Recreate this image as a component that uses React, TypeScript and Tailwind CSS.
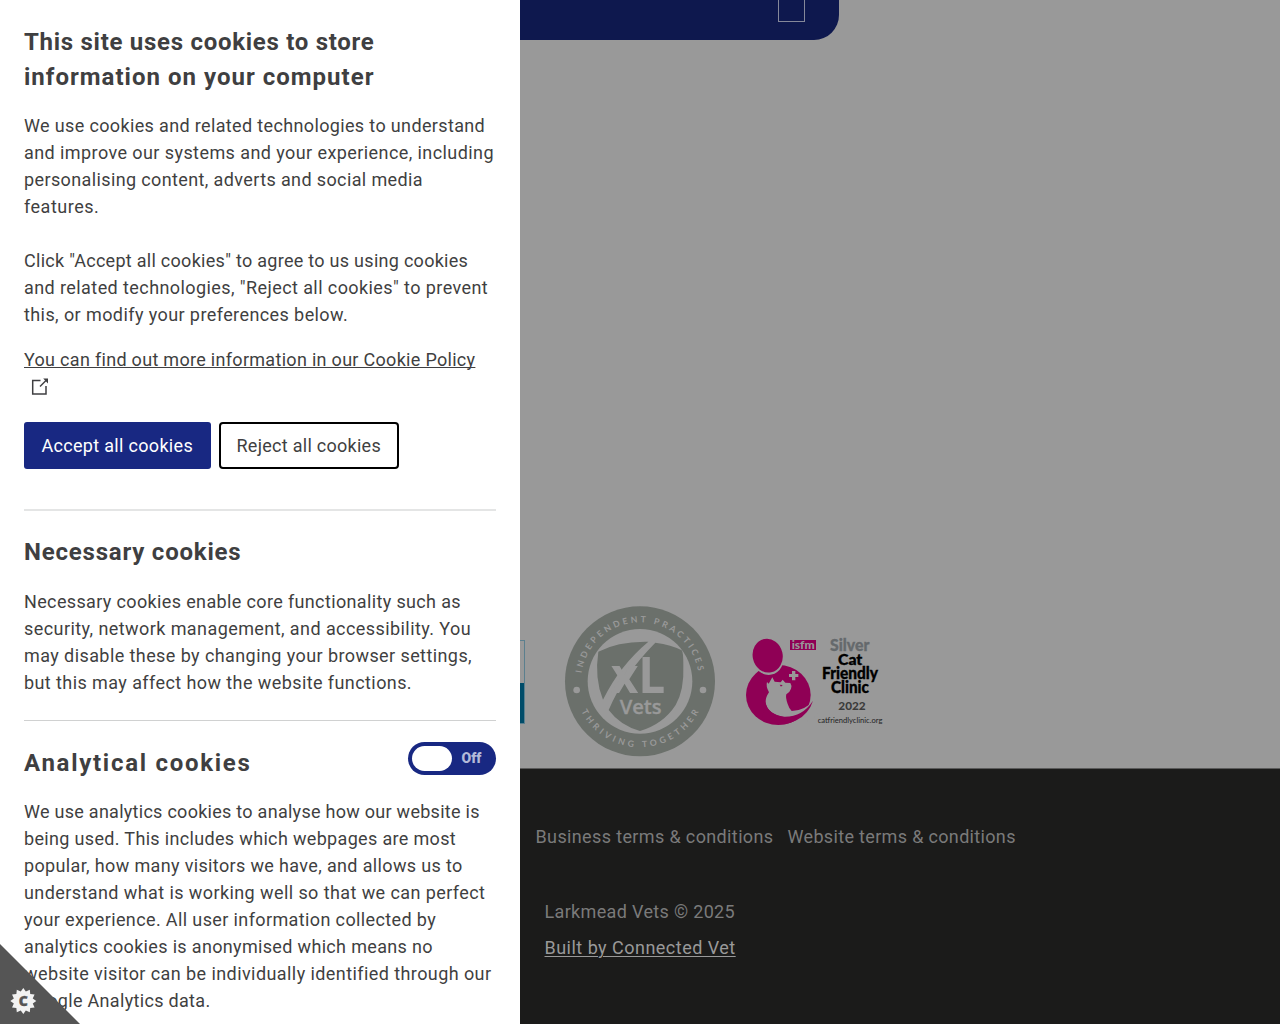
import React from 'react';

type LineData = [text: string, tracking: string];

function Lines({ lines }: { lines: LineData[] }) {
  return (
    <p className="text-[18px] leading-[27px]">
      {lines.map(([text, tracking]) => (
        <span key={text} className={`block whitespace-nowrap ${tracking}`}>
          {text}
        </span>
      ))}
    </p>
  );
}

const intro: LineData[] = [
  ['We use cookies and related technologies to understand', 'tracking-[0.355px]'],
  ['and improve our systems and your experience, including', 'tracking-[0.42px]'],
  ['personalising content, adverts and social media', 'tracking-[0.38px]'],
  ['features.', 'tracking-[0.5px]'],
];

const choices: LineData[] = [
  ['Click "Accept all cookies" to agree to us using cookies', 'tracking-[0.282px]'],
  ['and related technologies, "Reject all cookies" to prevent', 'tracking-[0.416px]'],
  ['this, or modify your preferences below.', 'tracking-[0.41px]'],
];

const necessary: LineData[] = [
  ['Necessary cookies enable core functionality such as', 'tracking-[0.36px]'],
  ['security, network management, and accessibility. You', 'tracking-[0.425px]'],
  ['may disable these by changing your browser settings,', 'tracking-[0.415px]'],
  ['but this may affect how the website functions.', 'tracking-[0.415px]'],
];

const analytical: LineData[] = [
  ['We use analytics cookies to analyse how our website is', 'tracking-[0.272px]'],
  ['being used. This includes which webpages are most', 'tracking-[0.335px]'],
  ['popular, how many visitors we have, and allows us to', 'tracking-[0.355px]'],
  ['understand what is working well so that we can perfect', 'tracking-[0.415px]'],
  ['your experience. All user information collected by', 'tracking-[0.38px]'],
  ['analytics cookies is anonymised which means no', 'tracking-[0.335px]'],
  ['website visitor can be individually identified through our', 'tracking-[0.42px]'],
  ['Google Analytics data.', 'tracking-[0.32px]'],
];

function XLVetsLogo() {
  return (
    <svg viewBox="0 0 510 495" className="h-[165px] w-[170px] shrink-0" aria-label="XL Vets">
      <defs>
        <path id="arcTop" d="M79.7 219.4 A177 177 0 0 1 430.3 219.4" />
        <path id="arcBottom" d="M78.6 334 A198 198 0 0 0 431.4 334" />
      </defs>
      <circle cx="255" cy="244" r="225" fill="#6b706b" />
      <circle cx="255" cy="244" r="157" fill="#999" />
      <path
        d="M130 155 Q190 123 280 125 Q194 197 144 299 Q118 235 130 155Z M301 128 Q350 134 380 151 Q385 155 385 195 Q388 270 362 315 Q325 372 255 393 Q195 376 161 330 Q205 225 301 128Z"
        fill="#6b706b"
      />
      <g fill="#999" fontFamily="Open Sans, sans-serif" fontWeight="700">
        <text x="167" y="278" fontSize="153" textLength="164" lengthAdjust="spacingAndGlyphs">xL</text>
        <text x="194" y="342" fontSize="61" fontWeight="600" textLength="126" lengthAdjust="spacingAndGlyphs" stroke="#999" strokeWidth="1">Vets</text>
      </g>
      <g fill="#999" fontFamily="Lato, sans-serif" fontWeight="700" fontSize="26">
        <text>
          <textPath href="#arcTop" textLength="500">INDEPENDENT PRACTICES</textPath>
        </text>
        <text>
          <textPath href="#arcBottom" textLength="434">THRIVING TOGETHER</textPath>
        </text>
      </g>
      <circle cx="65" cy="270" r="10" fill="#999" />
      <circle cx="444" cy="270" r="10" fill="#999" />
    </svg>
  );
}

function CatClinicLogo() {
  return (
    <svg viewBox="0 0 480 315" className="h-[105px] w-[160px] shrink-0" aria-label="Cat Friendly Clinic">
      <ellipse cx="130" cy="195" rx="97" ry="90" fill="#8f0055" />
      <ellipse cx="98" cy="79" rx="48" ry="56" transform="rotate(-12 98 79)" fill="#999" />
      <ellipse cx="98" cy="77" rx="45" ry="51" transform="rotate(-12 98 77)" fill="#8f0055" />
      <path
        d="M96 156 L101 161 L112 142 L119 155 L137 157 L143 149 L151 158 L166 159 Q171 166 168 176 Q164 188 154 193 Q151 203 158 222 Q162 235 170 243 Q211 241 234 212 L250 250 L225 275 L180 262 Q140 266 112 249 Q92 235 92 214 Q92 202 102 187 Q92 169 96 156Z"
        fill="#999"
      />
      <path d="M92 218 Q98 252 148 260 Q202 261 234 212 Q222 251 184 271 Q133 297 80 266Z" fill="#8f0055" />
      <path d="M134 164 l9 1 l-5 5z" fill="#8f0055" />
      <path d="M171 123h10v9h9v9h-9v10h-10v-10h-9v-9h9z" fill="#999" />
      <rect x="165" y="30" width="78" height="30" fill="#8f0055" />
      <g fontFamily="Lato, sans-serif" fontWeight="900">
        <text x="170" y="56" fontSize="32" fill="#999" textLength="69" lengthAdjust="spacingAndGlyphs">isfm</text>
        <text x="285" y="63" fontSize="48" fill="#65696c" stroke="#65696c" strokeWidth="1" textLength="118" lengthAdjust="spacingAndGlyphs">Silver</text>
        <g fill="#000" stroke="#000" strokeWidth="1">
          <text x="309" y="106" fontSize="47" textLength="73" lengthAdjust="spacingAndGlyphs">Cat</text>
          <text x="261" y="147" fontSize="49" textLength="168" lengthAdjust="spacingAndGlyphs">Friendly</text>
          <text x="288" y="188" fontSize="49" textLength="114" lengthAdjust="spacingAndGlyphs">Clinic</text>
        </g>
        <text x="310" y="240" fontSize="34" fill="#3c3c3c" textLength="82" lengthAdjust="spacingAndGlyphs">2022</text>
        <text x="248" y="279" fontSize="24" fontWeight="400" fill="#222" textLength="194" lengthAdjust="spacingAndGlyphs">catfriendlyclinic.org</text>
      </g>
    </svg>
  );
}

const badgePoints = Array.from({ length: 24 }, (_, i) => {
  const r = i % 2 === 0 ? 13 : 9.8;
  const a = (i * Math.PI) / 12;
  return `${(13 + r * Math.cos(a)).toFixed(2)},${(13 + r * Math.sin(a)).toFixed(2)}`;
}).join(' ');

function CookieControlTab() {
  return (
    <button className="absolute bottom-0 left-0 size-20" aria-label="Cookie control">
      <svg viewBox="0 0 80 80" className="size-20">
        <path d="M0 0 L80 80 H0Z" fill="#555" />
        <g transform="translate(10.3 44)">
          <polygon points={badgePoints} fill="#f2f2f2" />
          <text x="13" y="18" textAnchor="middle" fontFamily="Open Sans, sans-serif" fontWeight="800" fontSize="14" fill="#555" stroke="#555" strokeWidth="0.4">
            C
          </text>
        </g>
      </svg>
    </button>
  );
}

function CookiePanel() {
  return (
    <aside className="relative h-[1024px] w-[520px] shrink-0 overflow-hidden bg-white px-6 pt-[25px] text-[#3f3f41]">
      <h1 className="text-[24px] leading-[35px] font-bold">
        <span className="block tracking-[0.717px]">This site uses cookies to store</span>
        <span className="block tracking-[1.015px]">information on your computer</span>
      </h1>
      <div className="mt-[17px] flex flex-col gap-[27px]">
        <Lines lines={intro} />
        <Lines lines={choices} />
      </div>
      <a className="mt-[18px] block text-[18px] leading-[27px]">
        <span className="block whitespace-nowrap tracking-[0.3px] underline decoration-1 underline-offset-[1px] [text-decoration-skip-ink:none]">
          You can find out more information in our Cookie Policy
        </span>
        <svg viewBox="0 0 17 17" className="mt-[5px] ml-[7px] size-[17px]" fill="none" stroke="#3f3f41" strokeWidth="1.5">
          <path d="M9.5 2.5H1.7V16H15V8" />
          <path d="M9 8.5L15.5 2" />
          <path d="M12.2 .6h4.8v4.8z" fill="#3f3f41" stroke="none" />
        </svg>
      </a>
      <div className="mt-[26.5px] flex gap-2 text-[18px] leading-[27px]">
        <button className="h-[47px] w-[186.5px] rounded-[3px] bg-[#182882] tracking-[0.312px] text-white">Accept all cookies</button>
        <button className="h-[47px] w-[180.5px] rounded-[4px] border-2 border-black tracking-[0.274px]">Reject all cookies</button>
      </div>
      <hr className="mt-10 border-t-2 border-[#e4e5e5]" />
      <h2 className="mt-[24.5px] text-[24px] leading-[35px] font-bold tracking-[0.796px]">Necessary cookies</h2>
      <div className="mt-[18px]">
        <Lines lines={necessary} />
      </div>
      <hr className="mt-[24px] border-t border-[#d0d1d1]" />
      <div className="mt-[21px] flex items-start justify-between">
        <h2 className="mt-[4px] text-[24px] leading-[35px] font-bold tracking-[1.713px]">Analytical cookies</h2>
        <button className="flex h-[33px] w-[88px] items-center rounded-full bg-[#182882] pl-1">
          <span className="h-[25px] w-10 rounded-full bg-white" />
          <span className="ml-[9.5px] text-[14px] font-black text-[#b3b9d8]">Off</span>
        </button>
      </div>
      <div className="mt-[17px]">
        <Lines lines={analytical} />
      </div>
      <CookieControlTab />
    </aside>
  );
}

export default function App() {
  return (
    <div className="flex h-[1024px] w-[1280px] overflow-hidden font-['Roboto',sans-serif]">
      <CookiePanel />
      <main className="flex min-w-0 flex-1 flex-col bg-[#999]">
        <div className="flex h-[39.5px] w-[318.5px] justify-end rounded-br-[25px] bg-[#0e184e] pr-[34px]">
          <span className="h-[22px] w-[27px] border border-t-0 border-[#85889a]" />
        </div>
        <div className="mt-[560.5px] flex h-[168px] items-start">
          <div className="mt-10 h-[84px] w-[5px] border border-l-0 border-[#5b7f8e]">
            <div className="mt-[42px] h-[40px] bg-[#004c69]" />
          </div>
          <div className="ml-[30px]">
            <XLVetsLogo />
          </div>
          <div className="mt-[30px] ml-[10px]">
            <CatClinicLogo />
          </div>
        </div>
        <footer className="flex-1 border-t border-[#5a5a5a] bg-[#1b1b1a] pt-[54px] text-[18px] leading-[27px] text-[#7a7a7a]">
          <nav className="flex gap-[14px] pl-[15.5px] whitespace-nowrap">
            <a className="tracking-[0.37px]">Business terms &amp; conditions</a>
            <a className="tracking-[0.335px]">Website terms &amp; conditions</a>
          </nav>
          <div className="mt-[48px] pl-[24.5px]">
            <p className="tracking-[0.336px]">Larkmead Vets © 2025</p>
            <a className="mt-[9px] block w-fit tracking-[0.48px] text-[#999] underline decoration-1 underline-offset-[2px]">
              Built by Connected Vet
            </a>
          </div>
        </footer>
      </main>
    </div>
  );
}
